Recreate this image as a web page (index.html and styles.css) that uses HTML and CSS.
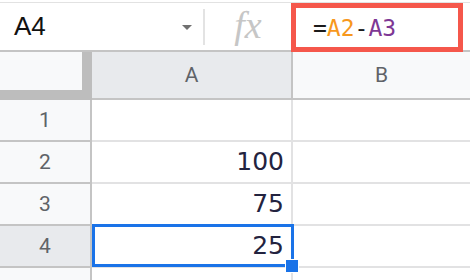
FILE: index.html
```html
<!DOCTYPE html>
<html lang="en">
  <head>
    <meta charset="UTF-8" />
    <meta name="viewport" content="width=device-width, initial-scale=1.0" />
    <title>Sheet - Formula</title>
    <link rel="stylesheet" href="styles.css">
  </head>
  <body>
    <div class="sheet">
      <div class="formula-bar">
        <div class="name-box">
          <span class="cell-ref">A4</span>
          <span class="caret"></span>
        </div>
        <div class="divider"></div>
        <div class="fx">fx</div>
        <div class="formula">=<span class="ref-a2">A2</span>-<span class="ref-a3">A3</span></div>
      </div>

      <div class="grid">
        <div class="row header-row">
          <div class="corner"><div class="corner-inner"></div></div>
          <div class="col-head col-a active">A</div>
          <div class="col-head col-b">B</div>
        </div>

        <div class="row">
          <div class="row-head">1</div>
          <div class="cell col-a"></div>
          <div class="cell col-b"></div>
        </div>

        <div class="row">
          <div class="row-head">2</div>
          <div class="cell col-a">100</div>
          <div class="cell col-b"></div>
        </div>

        <div class="row">
          <div class="row-head">3</div>
          <div class="cell col-a">75</div>
          <div class="cell col-b"></div>
        </div>

        <div class="row">
          <div class="row-head active">4</div>
          <div class="cell col-a selected">
            25
            <div class="selection"></div>
            <div class="fill-handle"></div>
          </div>
          <div class="cell col-b"></div>
        </div>

        <div class="row">
          <div class="row-head">5</div>
          <div class="cell col-a"></div>
          <div class="cell col-b"></div>
        </div>
      </div>
    </div>
  </body>
</html>
```

FILE: styles.css
```css
* {
  margin: 0;
  padding: 0;
  box-sizing: border-box;
}

body {
  background: #ffffff;
  width: 470px;
  height: 280px;
  overflow: hidden;
}

.sheet {
  padding-top: 2px;
}

/* Formula bar */
.formula-bar {
  display: flex;
  height: 50px;
  border-top: 1px solid #e2e2e2;
  border-bottom: 2px solid #c4c4c4;
  background: #ffffff;
}

.name-box {
  width: 203px;
  display: flex;
  align-items: center;
  justify-content: space-between;
  padding: 0 11px 0 14px;
}

.cell-ref {
  font-family: "Liberation Sans", Arial, sans-serif;
  font-size: 26px;
  color: #111111;
}

.caret {
  width: 0;
  height: 0;
  border-left: 5px solid transparent;
  border-right: 5px solid transparent;
  border-top: 5px solid #707070;
  margin-top: 2px;
}

.divider {
  width: 2px;
  height: 36px;
  align-self: center;
  background: #e3e3e3;
}

.fx {
  width: 86px;
  display: flex;
  align-items: center;
  justify-content: center;
  font-family: "Liberation Serif", "Times New Roman", serif;
  font-style: italic;
  font-size: 38px;
  color: #c6c6c6;
  padding-bottom: 4px;
}

.formula {
  width: 172px;
  height: 49px;
  margin-bottom: -2px;
  border: 5px solid #f5574b;
  padding-left: 17px;
  display: flex;
  align-items: center;
  font-family: "DejaVu Sans Mono", "Liberation Mono", monospace;
  font-size: 23px;
  color: #1b1b1b;
}

.ref-a2 {
  color: #f7981d;
}

.ref-a3 {
  color: #7e3794;
}

/* Grid */
.row {
  display: flex;
  height: 42px;
}

.header-row {
  height: 48px;
}

.corner {
  width: 92px;
  height: 48px;
  background: #bdbdbd;
}

.corner-inner {
  width: 82px;
  height: 38px;
  background: #f8f9fa;
}

.col-head {
  display: flex;
  align-items: center;
  justify-content: center;
  border-bottom: 2px solid #c4c4c4;
  background: #f8f9fa;
  font-family: Roboto, "Liberation Sans", sans-serif;
  font-size: 21px;
  color: #5f6368;
}

.col-head.col-a {
  border-right: 2px solid #c4c4c4;
}

.col-head.active {
  background: #e8eaed;
}

.col-a {
  width: 201px;
}

.col-b {
  flex: 1;
}

.row-head {
  width: 92px;
  display: flex;
  align-items: center;
  justify-content: center;
  background: #f8f9fa;
  border-right: 2px solid #c4c4c4;
  border-bottom: 2px solid #c4c4c4;
  font-family: Roboto, "Liberation Sans", sans-serif;
  font-size: 21px;
  color: #5f6368;
}

.row-head.active {
  background: #e8eaed;
}

.cell {
  border-bottom: 2px solid #e2e2e3;
  font-family: "DejaVu Sans", Verdana, sans-serif;
  font-size: 25px;
  line-height: 40px;
  color: #23233f;
  text-align: right;
  padding-right: 7px;
}

.cell.col-a {
  border-right: 2px solid #e2e2e3;
}

.cell.selected {
  position: relative;
}

.selection {
  position: absolute;
  top: -2px;
  left: 0;
  right: -3px;
  bottom: -1px;
  border: 3px solid #1a73e8;
}

.fill-handle {
  position: absolute;
  right: -7px;
  bottom: -6px;
  width: 12px;
  height: 12px;
  background: #1a73e8;
  box-shadow: 0 0 0 1px #ffffff;
}
```
